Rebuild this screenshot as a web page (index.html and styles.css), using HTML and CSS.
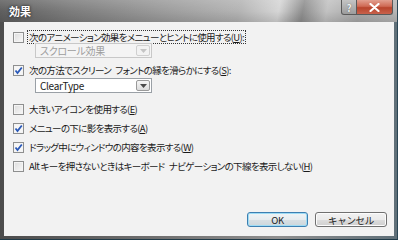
FILE: index.html
```html
<!DOCTYPE html>
<html lang="ja">
<head>
    <meta charset="UTF-8">
    <title>効果</title>
    <link rel="stylesheet" href="styles.css">
</head>
<body>
    <div class="window">
        <div class="titlebar">
            <span class="title">効果</span>
            <div class="caption-buttons">
                <span class="cap-btn help">?</span>
                <span class="cap-btn close">
                    <svg width="11" height="9" viewBox="0 0 11 9"><path d="M1.5 1 L9.5 8 M9.5 1 L1.5 8" stroke="#fff" stroke-width="2.2" stroke-linecap="round"/></svg>
                </span>
            </div>
        </div>
        <div class="client">
            <div class="options">
                <div class="option first">
                    <span class="box"></span>
                    <span class="label focus">次のアニメーション効果をメニューとヒントに使用する(<u>U</u>):</span>
                </div>
                <div class="combo disabled top">
                    <span class="combo-text">スクロール効果</span>
                    <span class="combo-arrow"><svg width="7" height="4" viewBox="0 0 7 4"><path d="M0 0 H7 L3.5 4 Z" fill="#c4c4c4"/></svg></span>
                </div>
                <div class="option">
                    <span class="box checked"><svg width="9" height="9" viewBox="0 0 9 9"><path d="M1.5 4.5 L3.5 7 L7.8 1.5" fill="none" stroke="#2a59b8" stroke-width="1.8"/></svg></span>
                    <span class="label">次の方法でスクリーン&ensp;フォントの縁を滑らかにする(<u>S</u>):</span>
                </div>
                <div class="combo">
                    <span class="combo-text">ClearType</span>
                    <span class="combo-arrow"><svg width="7" height="4" viewBox="0 0 7 4"><path d="M0 0 H7 L3.5 4 Z" fill="#4a4a4a"/></svg></span>
                </div>
                <div class="option spaced">
                    <span class="box"></span>
                    <span class="label">大きいアイコンを使用する(<u>E</u>)</span>
                </div>
                <div class="option">
                    <span class="box checked"><svg width="9" height="9" viewBox="0 0 9 9"><path d="M1.5 4.5 L3.5 7 L7.8 1.5" fill="none" stroke="#2a59b8" stroke-width="1.8"/></svg></span>
                    <span class="label">メニューの下に影を表示する(<u>A</u>)</span>
                </div>
                <div class="option">
                    <span class="box checked"><svg width="9" height="9" viewBox="0 0 9 9"><path d="M1.5 4.5 L3.5 7 L7.8 1.5" fill="none" stroke="#2a59b8" stroke-width="1.8"/></svg></span>
                    <span class="label">ドラッグ中にウィンドウの内容を表示する(<u>W</u>)</span>
                </div>
                <div class="option">
                    <span class="box"></span>
                    <span class="label">Alt キーを押さないときはキーボード&ensp;ナビゲーションの下線を表示しない(<u>H</u>)</span>
                </div>
            </div>
            <div class="buttons">
                <button class="btn default">OK</button>
                <button class="btn">キャンセル</button>
            </div>
        </div>
    </div>
</body>
</html>
```

FILE: styles.css
```css
body {
    margin: 0;
    background: #ffffff;
    font-family: "Noto Sans CJK JP", "Noto Sans", sans-serif;
}

.window {
    width: 398px;
    height: 240px;
    display: flex;
    flex-direction: column;
    background: linear-gradient(to right, #4c4c4c 0%, #707070 40%, #909090 70%, #5f6f78 100%);
    box-sizing: border-box;
    padding: 0 3px 3px 4px;
    border-bottom: 1px solid #1f3a48;
    border-right: 1px solid #2a4655;
}

.titlebar {
    height: 22px;
    margin: 0 -3px 0 -4px;
    display: flex;
    justify-content: space-between;
    align-items: flex-start;
    background:
        linear-gradient(to bottom, rgba(255,255,255,0.15) 0%, rgba(255,255,255,0) 50%, rgba(0,0,0,0.12) 100%),
        linear-gradient(100deg, #5e5e5e 0%, #7d7d7d 18%, #9b9b9b 40%, #b4b4b4 60%, #d6d6d6 70%, #8f8f8f 76%, #c2c2c2 82%, #aaaaaa 90%, #b8b8b8 100%);
}

.title {
    margin: 5px 0 0 9px;
    font-size: 11px;
    font-weight: bold;
    color: #ffffff;
    line-height: 12px;
    text-shadow: 0 0 2px #333, 0 0 3px #333;
}

.caption-buttons {
    display: flex;
    margin-right: 4px;
}

.cap-btn {
    height: 15px;
    display: flex;
    align-items: center;
    justify-content: center;
    border: 1px solid #5a5a5a;
    border-top: none;
    box-sizing: border-box;
}

.help {
    width: 16px;
    font-size: 10px;
    font-weight: bold;
    color: #eeeeee;
    background: linear-gradient(to bottom, #c4c4c4, #9c9c9c);
    border-radius: 0 0 0 3px;
    text-shadow: 0 0 1px #555;
}

.close {
    width: 36px;
    border-left: none;
    background: linear-gradient(to bottom, #e2a090 0%, #cf6a55 45%, #b8442c 55%, #c8624c 100%);
    border-radius: 0 0 3px 0;
}

.client {
    flex: 1;
    display: flex;
    flex-direction: column;
    justify-content: space-between;
    background: #f2f2f2;
    padding: 8px 0 9px 9px;
    font-size: 9.5px;
    color: #1a1a1a;
    font-feature-settings: "palt";
    letter-spacing: -0.65px;
}

.options {
    display: flex;
    flex-direction: column;
}

.option {
    display: flex;
    align-items: center;
    height: 14px;
    margin-top: 5px;
}

.option.first {
    margin-top: 0;
}

.option.spaced {
    margin-top: 9px;
}

.box {
    width: 11px;
    height: 11px;
    flex-shrink: 0;
    box-sizing: border-box;
    border: 1px solid #8e8f8f;
    background: linear-gradient(135deg, #dcdcdc, #f8f8f8);
    box-shadow: inset 0 0 0 1px #f4f4f4;
    margin-right: 4px;
    display: flex;
    align-items: center;
    justify-content: center;
}

.box.checked {
    background: #f6f6f6;
}

.label {
    line-height: 12px;
    white-space: nowrap;
    padding: 0 1px;
}

.focus {
    outline: 1px dotted #333;
}

.combo {
    width: 117px;
    height: 15px;
    margin: 1px 0 0 22px;
    box-sizing: border-box;
    border: 1px solid #9aa0a6;
    background: #ffffff;
    display: flex;
    align-items: center;
    justify-content: space-between;
    padding: 0 1px 0 4px;
    font-size: 10px;
    letter-spacing: -0.3px;
}

.combo.top {
    margin-top: -1px;
}

.combo.disabled {
    border-color: #c8c8c8;
    background: #f4f4f4;
    color: #9d9d9d;
}

.combo-arrow {
    width: 14px;
    height: 11px;
    box-sizing: border-box;
    border: 1px solid #9a9a9a;
    border-radius: 2px;
    background: linear-gradient(to bottom, #f6f6f6, #dcdcdc);
    display: flex;
    align-items: center;
    justify-content: center;
}

.disabled .combo-arrow {
    border-color: #d0d0d0;
    background: #f2f2f2;
}

.buttons {
    display: flex;
    justify-content: flex-end;
    gap: 7px;
    padding-right: 7px;
}

.btn {
    width: 72px;
    height: 15px;
    padding: 0;
    font-family: inherit;
    font-size: 9.5px;
    letter-spacing: -0.3px;
    line-height: 12px;
    color: #1a1a1a;
    border: 1px solid #707070;
    border-radius: 3px;
    background: linear-gradient(to bottom, #f2f2f2 0%, #ebebeb 50%, #dddddd 51%, #cfcfcf 100%);
    box-shadow: inset 0 0 0 1px #fcfcfc;
}

.btn.default {
    width: 61px;
    border-color: #3c7fb1;
    box-shadow: inset 0 0 0 1px #9edcf5;
    background: linear-gradient(to bottom, #f0f4f6 0%, #e6ecef 50%, #d8e0e4 51%, #cdd6db 100%);
}
```
